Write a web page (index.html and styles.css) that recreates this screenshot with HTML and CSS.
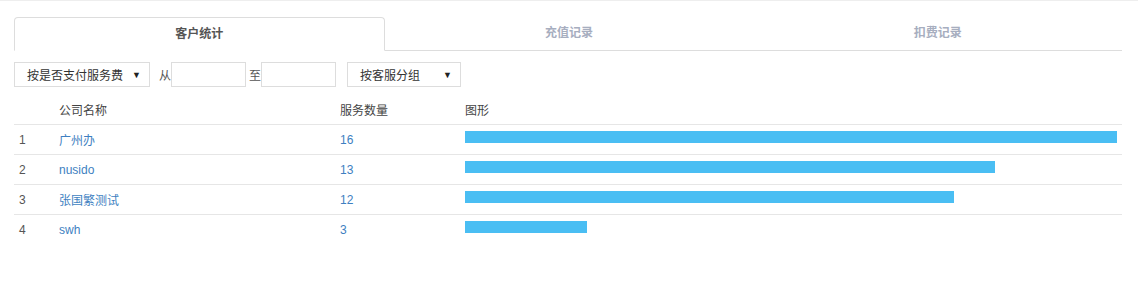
FILE: index.html
```html
<!DOCTYPE html>
<html lang="zh-CN">
<head>
<meta charset="utf-8">
<title>客户统计</title>
<link rel="stylesheet" href="styles.css">
</head>
<body>
<div class="page">
  <div class="tabs">
    <div class="tab active">客户统计</div>
    <div class="tab">充值记录</div>
    <div class="tab">扣费记录</div>
  </div>
  <div class="filters">
    <div class="select sel-pay"><span>按是否支付服务费</span><span class="arrow">▼</span></div>
    <span class="label">从</span>
    <input class="field" type="text">
    <span class="label label-to">至</span>
    <input class="field" type="text">
    <div class="select sel-group"><span>按客服分组</span><span class="arrow">▼</span></div>
  </div>
  <table class="stats">
    <colgroup>
      <col class="c-idx"><col class="c-name"><col class="c-num"><col class="c-bar">
    </colgroup>
    <thead>
      <tr><th></th><th>公司名称</th><th>服务数量</th><th>图形</th></tr>
    </thead>
    <tbody>
      <tr><td>1</td><td><a href="#">广州办</a></td><td><a href="#">16</a></td><td><div class="bar" style="width:100%"></div></td></tr>
      <tr><td>2</td><td><a href="#">nusido</a></td><td><a href="#">13</a></td><td><div class="bar" style="width:81.25%"></div></td></tr>
      <tr><td>3</td><td><a href="#">张国繁测试</a></td><td><a href="#">12</a></td><td><div class="bar" style="width:75%"></div></td></tr>
      <tr><td>4</td><td><a href="#">swh</a></td><td><a href="#">3</a></td><td><div class="bar" style="width:18.75%"></div></td></tr>
    </tbody>
  </table>
</div>
</body>
</html>
```

FILE: styles.css
```css
html, body {
  margin: 0;
  padding: 0;
  background: #fff;
}
body {
  font-family: "Liberation Sans", "Noto Sans CJK SC", sans-serif;
  font-size: 12px;
  color: #333;
  border-top: 1px solid #eeeeee;
}
.page {
  padding: 16px 16px 0 14px;
}
.tabs {
  display: flex;
}
.tab {
  flex: 1 1 0;
  box-sizing: border-box;
  height: 34px;
  line-height: 33px;
  text-align: center;
  font-weight: bold;
  color: #a7aebf;
  border-bottom: 1px solid #dddddd;
}
.tab.active {
  color: #555;
  border: 1px solid #dddddd;
  border-bottom-color: transparent;
  border-radius: 4px 4px 0 0;
  line-height: 32px;
}
.filters {
  display: flex;
  align-items: center;
  margin-top: 11px;
  height: 25px;
}
.select {
  box-sizing: border-box;
  height: 25px;
  border: 1px solid #dddddd;
  display: flex;
  align-items: center;
  justify-content: space-between;
  padding: 0 8px 0 12px;
  color: #333;
}
.sel-pay { width: 136px; }
.sel-group { width: 114px; margin-left: 11px; }
.arrow {
  font-size: 9px;
  color: #222;
}
.label {
  margin-left: 9px;
  color: #555;
}
.label-to {
  margin-left: 3px;
}
.field {
  box-sizing: border-box;
  width: 75px;
  height: 25px;
  border: 1px solid #dddddd;
  margin: 0;
  padding: 0 4px;
  font: inherit;
  outline: none;
}
.stats {
  width: 100%;
  border-collapse: collapse;
  margin-top: 7px;
  table-layout: fixed;
}
.c-idx { width: 40px; }
.c-name { width: 281px; }
.c-num { width: 125px; }
.stats th,
.stats td {
  height: 29px;
  padding: 0 5px;
  text-align: left;
  font-weight: normal;
  vertical-align: middle;
}
.stats th {
  color: #444;
  height: 30px;
}
.stats td {
  border-top: 1px solid #e6e6e6;
  color: #555;
}
.stats a {
  color: #3e7fc1;
  text-decoration: none;
}
.bar {
  height: 12px;
  background: #4abef3;
  margin-top: -5px;
}
```
